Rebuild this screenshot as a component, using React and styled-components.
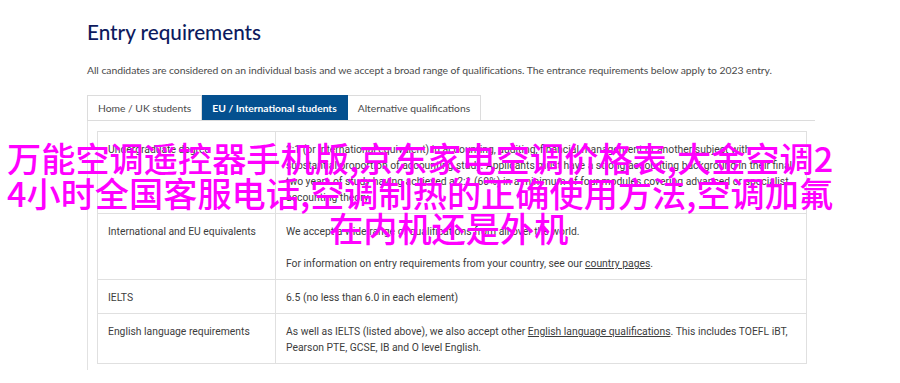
import React from "react";
import styled, { createGlobalStyle } from "styled-components";

const GlobalStyle = createGlobalStyle`
  html, body { margin: 0; padding: 0; background: #ffffff; }
  body { font-family: Roboto, "Liberation Sans", sans-serif; }
  * { box-sizing: border-box; }
`;

const Page = styled.div`
  position: relative;
  width: 900px;
  height: 383px;
  overflow: hidden;
  background: #fff;
`;

const Content = styled.main`
  width: 728px;
  margin-left: 87px;
  padding-top: 18px;
`;

const Heading = styled.h2`
  margin: 0;
  font-family: Lato, "Open Sans", sans-serif;
  font-weight: 500;
  font-size: 20.7px;
  line-height: 28px;
  color: #0d1a5e;
`;

const Intro = styled.p`
  margin: 16px 0 0;
  font-family: Lato, sans-serif;
  font-size: 10.4px;
  letter-spacing: -0.05px;
  line-height: 16px;
  color: #4a4a4a;
  white-space: nowrap;
`;

const TabStrip = styled.div`
  display: flex;
  margin-top: 17px;
  border-bottom: 1px solid #dcdcdc;
`;

const Tab = styled.div`
  height: 25px;
  padding: 0 10px;
  display: flex;
  align-items: center;
  font-family: Lato, sans-serif;
  font-size: 10.3px;
  font-weight: ${(p) => (p.$active ? 700 : 400)};
  color: ${(p) => (p.$active ? "#ffffff" : "#4a4a4a")};
  background: ${(p) => (p.$active ? "#04508f" : "#ffffff")};
  border: 1px solid ${(p) => (p.$active ? "#04508f" : "#dcdcdc")};
  border-bottom: none;
  & + & { border-left: none; }
`;

const Panel = styled.section`
  border-left: 1px solid #e2e2e2;
  padding: 10px 0 6px 9px;
`;

const Table = styled.table`
  width: 710px;
  table-layout: fixed;
  border-collapse: collapse;
  font-family: Roboto, sans-serif;
  font-size: 10.35px;
  line-height: 16px;
  color: #3d3d3d;
`;

const LabelCol = styled.col`
  width: 178px;
`;

const LabelCell = styled.td`
  padding: 10px 10px 7px 10px;
  vertical-align: top;
  border: 1px solid #e0e0e0;
`;

const ValueCell = styled.td`
  padding: 10px 10px 7px 10px;
  vertical-align: top;
  border: 1px solid #e0e0e0;
`;

const CellText = styled.p`
  margin: 0;
  & + & { margin-top: 16px; }
`;

const Link = styled.a`
  color: inherit;
  text-decoration: underline;
`;

const Watermark = styled.div`
  position: absolute;
  left: 7px;
  top: 140px;
  font-family: "Noto Sans CJK SC", sans-serif;
  font-size: 34.2px;
  font-weight: 500;
  line-height: 35px;
  color: #ff00ff;
  white-space: nowrap;
  pointer-events: none;
`;

const WatermarkLine = styled.div`
  margin-left: ${(p) => p.$indent || 0}px;
`;

export default function App() {
  return (
    <Page>
      <GlobalStyle />
      <Content>
        <Heading>Entry requirements</Heading>
        <Intro>
          All candidates are considered on an individual basis and we accept a broad range of
          qualifications. The entrance requirements below apply to 2023 entry.
        </Intro>
        <TabStrip>
          <Tab>Home / UK students</Tab>
          <Tab $active>EU / International students</Tab>
          <Tab>Alternative qualifications</Tab>
        </TabStrip>
        <Panel>
          <Table>
            <colgroup>
              <LabelCol />
              <col />
            </colgroup>
            <tbody>
              <tr>
                <LabelCell>Undergraduate degree</LabelCell>
                <ValueCell>
                  <CellText>
                    2:1 (or international equivalent) in accounting, auditing, financial management or
                    another subject with substantial proportion of accounting study. Applicants must
                    have a strong accounting background in their final two years of study having
                    achieved a 2:1 (60%) in a minimum of four modules covering advanced or specialist
                    accounting theory.
                  </CellText>
                </ValueCell>
              </tr>
              <tr>
                <LabelCell>International and EU equivalents</LabelCell>
                <ValueCell>
                  <CellText>We accept a wide range of qualifications from all over the world.</CellText>
                  <CellText>
                    For information on entry requirements from your country, see our{" "}
                    <Link>country pages</Link>.
                  </CellText>
                </ValueCell>
              </tr>
              <tr>
                <LabelCell>IELTS</LabelCell>
                <ValueCell>6.5 (no less than 6.0 in each element)</ValueCell>
              </tr>
              <tr>
                <LabelCell>English language requirements</LabelCell>
                <ValueCell>
                  As well as IELTS (listed above), we also accept other{" "}
                  <Link>English language qualifications</Link>. This includes TOEFL iBT, Pearson PTE,
                  GCSE, IB and O level English.
                </ValueCell>
              </tr>
            </tbody>
          </Table>
        </Panel>
      </Content>
      <Watermark>
        <WatermarkLine>万能空调遥控器手机版,京东家电空调价格表,大金空调2</WatermarkLine>
        <WatermarkLine>4小时全国客服电话,空调制热的正确使用方法,空调加氟</WatermarkLine>
        <WatermarkLine $indent={322}>在内机还是外机</WatermarkLine>
      </Watermark>
    </Page>
  );
}
